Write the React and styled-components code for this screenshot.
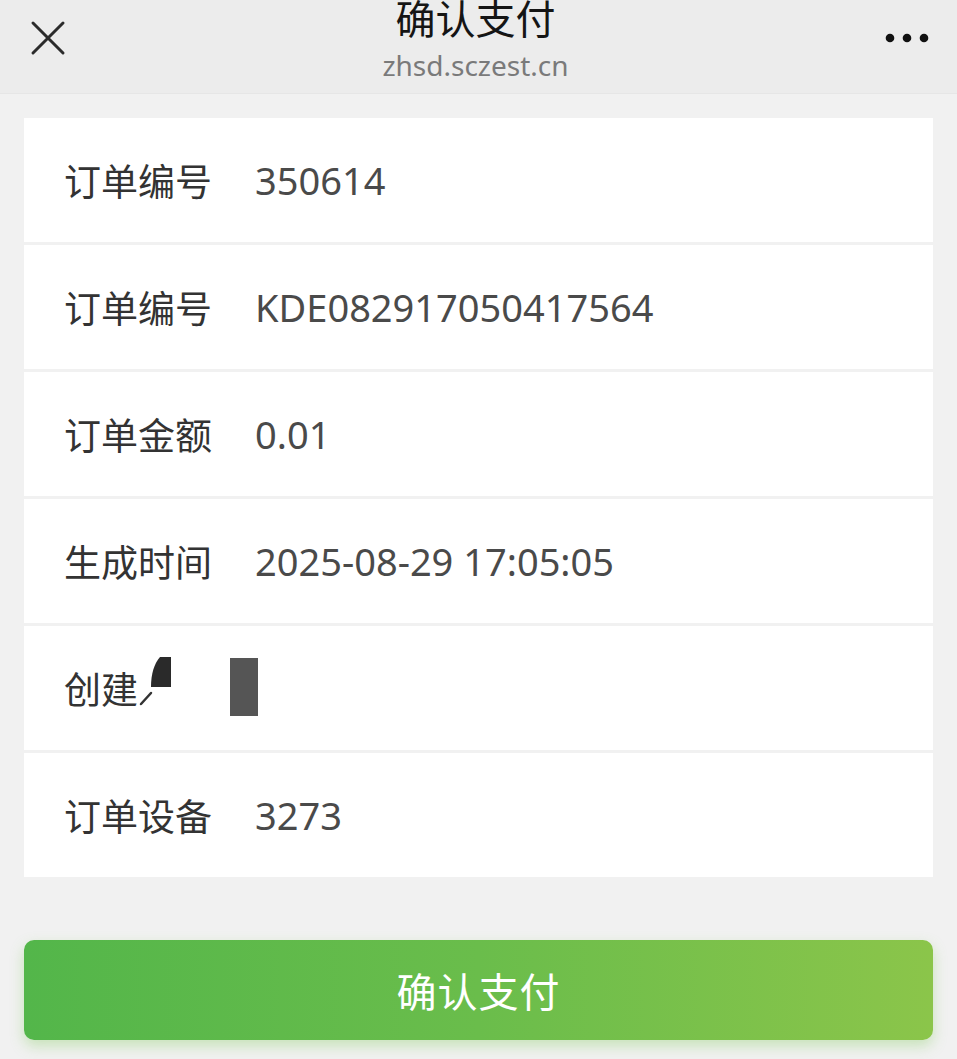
import React from 'react';
import styled, { createGlobalStyle } from 'styled-components';

const GlobalStyle = createGlobalStyle`
  html, body {
    margin: 0;
    padding: 0;
    background: #f1f1f1;
    font-family: "Noto Sans CJK SC", "Noto Sans", sans-serif;
  }
  * { box-sizing: border-box; }
`;

const rows = [
  { label: '订单编号', value: '350614' },
  { label: '订单编号', value: 'KDE082917050417564' },
  { label: '订单金额', value: '0.01' },
  { label: '生成时间', value: '2025-08-29 17:05:05' },
  { label: '创建', value: '', masked: true },
  { label: '订单设备', value: '3273' },
];

const App = () => {
  return (
    <Page>
      <GlobalStyle />
      <Header>
        <IconButton>
          <svg width="36" height="36" viewBox="0 0 36 36">
            <path d="M3 3 L33 33 M33 3 L3 33" stroke="#2b2b2b" strokeWidth="3" strokeLinecap="round" />
          </svg>
        </IconButton>
        <TitleBlock>
          <Title>确认支付</Title>
          <Domain>zhsd.sczest.cn</Domain>
        </TitleBlock>
        <IconButton>
          <svg width="44" height="10" viewBox="0 0 44 10">
            <circle cx="5" cy="5" r="4.3" fill="#111" />
            <circle cx="22" cy="5" r="4.3" fill="#111" />
            <circle cx="39" cy="5" r="4.3" fill="#111" />
          </svg>
        </IconButton>
      </Header>

      <Content>
        <Card>
          {rows.map((row, i) => (
            <Row key={i}>
              <Label>
                {row.label}
                {row.masked && (
                  <svg width="36" height="64" viewBox="0 0 36 64">
                    <path d="M3 48 L13 37" stroke="#333" strokeWidth="2.5" strokeLinecap="round" />
                    <path d="M13 31 C13 18 16 8 22 1 L33 1 L33 31 Z" fill="#2a2a2a" />
                  </svg>
                )}
              </Label>
              {row.masked ? <MaskBlock /> : <Value>{row.value}</Value>}
            </Row>
          ))}
        </Card>

        <PayButton>确认支付</PayButton>
      </Content>
    </Page>
  );
};

const Page = styled.div`
  min-height: 100vh;
  background: #f1f1f1;
  overflow: hidden;
`;

const Header = styled.div`
  height: 94px;
  background: #ececec;
  border-bottom: 1px solid #e6e6e6;
  display: flex;
  align-items: flex-start;
  justify-content: space-between;
  padding: 0 28px 0 30px;
`;

const IconButton = styled.div`
  height: 76px;
  display: flex;
  align-items: center;
`;

const TitleBlock = styled.div`
  display: flex;
  flex-direction: column;
  align-items: center;
  margin-top: -7px;
`;

const Title = styled.div`
  font-size: 40px;
  line-height: 48px;
  font-weight: 400;
  color: #151515;
`;

const Domain = styled.div`
  font-family: "Noto Sans", sans-serif;
  font-size: 28px;
  line-height: 36px;
  color: #7a7a7a;
  margin-top: 6px;
`;

const Content = styled.div`
  padding: 24px 24px 0;
`;

const Card = styled.div`
  display: flex;
  flex-direction: column;
  gap: 3px;
`;

const Row = styled.div`
  height: 124px;
  background: #fff;
  display: flex;
  align-items: center;
  padding-left: 40px;
`;

const Label = styled.div`
  width: 191px;
  font-size: 37px;
  color: #333;
  display: flex;
  align-items: center;
`;

const Value = styled.div`
  font-family: "Noto Sans", sans-serif;
  font-size: 38px;
  color: #4a4a4a;
`;

const MaskBlock = styled.div`
  width: 28px;
  height: 58px;
  background: #555;
  margin-left: -25px;
  margin-top: -2px;
`;

const PayButton = styled.button`
  display: block;
  width: 100%;
  height: 100px;
  margin-top: 63px;
  border: none;
  border-radius: 10px;
  background: linear-gradient(90deg, #53b64a 0%, #6abd4b 50%, #8bc54a 100%);
  box-shadow: 0 6px 14px rgba(120, 200, 80, 0.35);
  color: #fff;
  font-family: "Noto Sans CJK SC", sans-serif;
  font-size: 40px;
  letter-spacing: 1px;
`;

export default App;
